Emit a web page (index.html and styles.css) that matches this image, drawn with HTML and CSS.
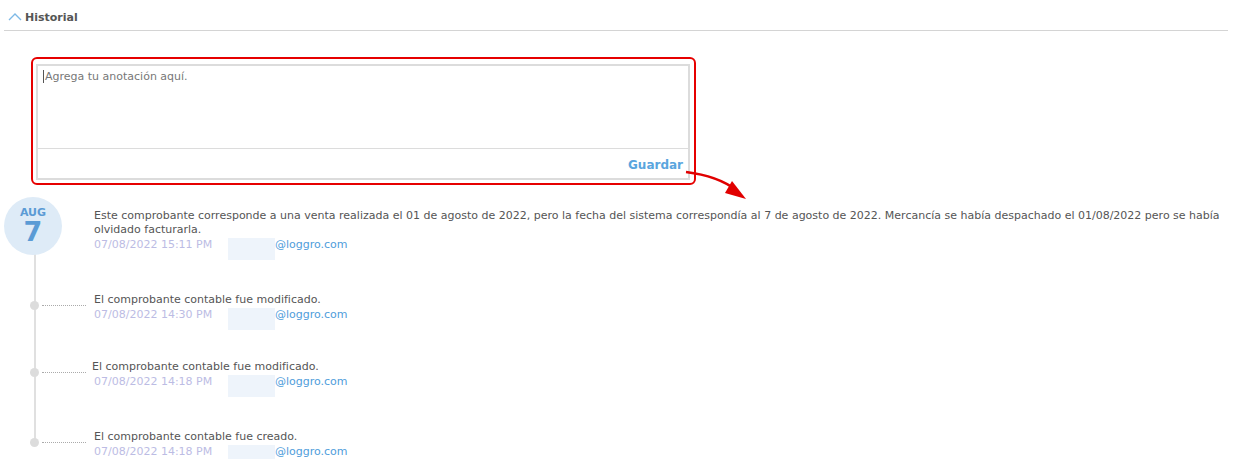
FILE: index.html
```html
<!DOCTYPE html>
<html lang="es">
<head>
    <meta charset="UTF-8">
    <title>Historial</title>
    <link rel="stylesheet" href="styles.css">
</head>
<body>

<div class="section">
    <!-- Header -->
    <div class="section-header">
        <svg class="chevron" width="14" height="10" viewBox="0 0 14 10"><path d="M1 8 L7 2 L13 8" fill="none" stroke="#7db9e6" stroke-width="1.4"/></svg>
        <span>Historial</span>
    </div>

    <!-- Note box -->
    <div class="note-highlight">
        <div class="note-box">
            <div class="note-input"><span class="caret"></span>Agrega tu anotación aquí.</div>
            <div class="note-footer"><a href="#">Guardar</a></div>
        </div>
        <svg class="arrow" width="72" height="40" viewBox="0 0 72 40">
            <path d="M2 4 Q 34 8 52 22" fill="none" stroke="#e10000" stroke-width="2.6"/>
            <polygon points="48,13 62,31 41,25" fill="#e10000"/>
        </svg>
    </div>

    <!-- Timeline -->
    <div class="timeline">
        <div class="tl-item first">
            <div class="marker">
                <div class="date-badge">
                    <div class="month">AUG</div>
                    <div class="day">7</div>
                </div>
            </div>
            <div class="tl-content">
                <div class="tl-text">Este comprobante corresponde a una venta realizada el 01 de agosto de 2022, pero la fecha del sistema correspondía al 7 de agosto de 2022. Mercancía se había despachado el 01/08/2022 pero se había olvidado facturarla.</div>
                <div class="tl-meta"><span class="tl-date">07/08/2022 15:11 PM</span><span class="blur"></span><span class="email">@loggro.com</span></div>
            </div>
        </div>

        <div class="tl-item">
            <div class="marker"><span class="dot"></span><span class="dots"></span></div>
            <div class="tl-content">
                <div class="tl-text">El comprobante contable fue modificado.</div>
                <div class="tl-meta"><span class="tl-date">07/08/2022 14:30 PM</span><span class="blur"></span><span class="email">@loggro.com</span></div>
            </div>
        </div>

        <div class="tl-item">
            <div class="marker"><span class="dot"></span><span class="dots"></span></div>
            <div class="tl-content">
                <div class="tl-text shift">El comprobante contable fue modificado.</div>
                <div class="tl-meta"><span class="tl-date">07/08/2022 14:18 PM</span><span class="blur"></span><span class="email">@loggro.com</span></div>
            </div>
        </div>

        <div class="tl-item">
            <div class="marker"><span class="dot"></span><span class="dots"></span></div>
            <div class="tl-content">
                <div class="tl-text">El comprobante contable fue creado.</div>
                <div class="tl-meta"><span class="tl-date">07/08/2022 14:18 PM</span><span class="blur"></span><span class="email">@loggro.com</span></div>
            </div>
        </div>
    </div>
</div>

</body>
</html>
```

FILE: styles.css
```css
body {
    margin: 0;
    font-family: "DejaVu Sans", Verdana, sans-serif;
    font-size: 11px;
    color: #555;
    background-color: #fff;
}
.section {
    width: 1224px;
    margin-left: 4px;
}
.section-header {
    display: flex;
    align-items: center;
    gap: 3px;
    height: 26px;
    padding: 4px 0 0 4px;
    border-bottom: 1px solid #d4d4d4;
    font-weight: bold;
    font-size: 11px;
    color: #555;
}
.chevron {
    margin-top: -1px;
}
.note-highlight {
    position: relative;
    width: 654px;
    margin: 26px 0 0 27px;
    padding: 5px 4px 3px 3px;
    border: 2px solid #e60000;
    border-radius: 6px;
}
.note-box {
    border: 2px solid #dcdcdc;
    background-color: #fff;
}
.note-input {
    box-sizing: border-box;
    height: 83px;
    padding: 4px 5px;
    color: #777;
    border-bottom: 1px solid #dcdcdc;
}
.caret {
    display: inline-block;
    width: 1px;
    height: 13px;
    margin-right: 1px;
    vertical-align: -3px;
    background-color: #555;
}
.note-footer {
    box-sizing: border-box;
    height: 29px;
    display: flex;
    justify-content: flex-end;
    align-items: center;
    padding: 3px 5px 0 0;
}
.note-footer a {
    color: #5aa5de;
    font-weight: bold;
    font-size: 12px;
    text-decoration: none;
}
.arrow {
    position: absolute;
    right: -62px;
    bottom: -25px;
}
.timeline {
    position: relative;
    margin-left: -4px;
    margin-top: 12px;
}
.timeline::before {
    content: "";
    position: absolute;
    left: 34px;
    top: 56px;
    height: 188px;
    width: 2px;
    background-color: #e0e0e0;
}
.tl-item {
    display: flex;
    position: relative;
    margin-top: 38px;
}
.tl-item:last-child {
    margin-top: 41px;
}
.tl-item.first {
    margin-top: 0;
    min-height: 58px;
}
.marker {
    width: 86px;
    display: flex;
    align-items: center;
    height: 14px;
    padding-top: 5px;
}
.tl-item.first .marker {
    height: auto;
    padding: 0 0 0 4px;
    align-items: flex-start;
}
.date-badge {
    width: 58px;
    height: 58px;
    border-radius: 50%;
    background-color: #deebf7;
    color: #5b9bd5;
    text-align: center;
    font-weight: bold;
}
.month {
    font-size: 11px;
    padding-top: 10px;
    line-height: 12px;
}
.day {
    font-size: 27px;
    line-height: 26px;
}
.dot {
    width: 9px;
    height: 9px;
    margin-left: 30px;
    border-radius: 50%;
    background-color: #dcdcdc;
}
.dots {
    width: 44px;
    margin-left: 3px;
    margin-top: 1px;
    border-bottom: 1px dotted #aaa;
}
.tl-content {
    flex: 1;
    padding-left: 8px;
}
.tl-item.first .tl-content {
    padding-top: 12px;
    padding-left: 4px;
}
.tl-text {
    line-height: 14px;
    color: #555;
}
.tl-text.shift {
    margin-left: -2px;
}
.tl-meta {
    display: flex;
    align-items: center;
    line-height: 14px;
    height: 15px;
}
.tl-date {
    color: #bcbce4;
    width: 134px;
}
.blur {
    display: inline-block;
    width: 47px;
    height: 22px;
    margin-top: 8px;
    background-color: #eef4fb;
}
.email {
    color: #4f9ddb;
}
```
